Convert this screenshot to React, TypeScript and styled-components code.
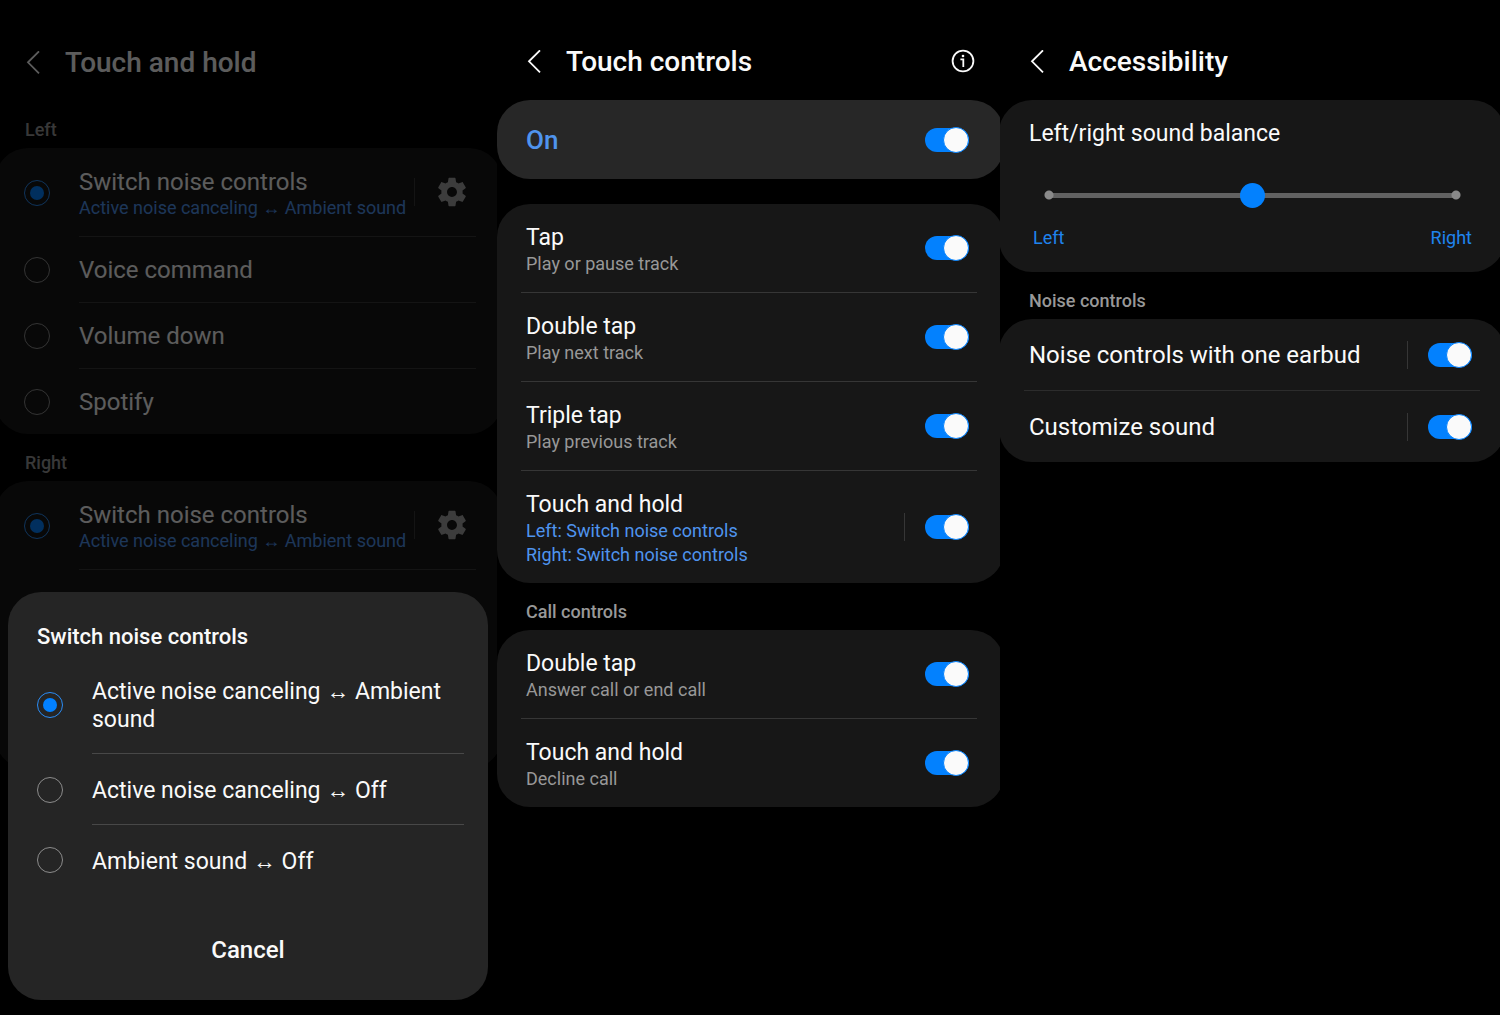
import React, { useState } from "react";
import styled, { createGlobalStyle, css } from "styled-components";

const blue = "#0381fe";
const softBlue = "#4f94ee";

const GlobalStyle = createGlobalStyle`
  *, *::before, *::after { box-sizing: border-box; }
  body {
    margin: 0;
    background: #000;
    color: #fafafa;
    font-family: Roboto, "Noto Sans", sans-serif;
  }
  h1, h2, p { margin: 0; font-weight: 400; }
  button { font: inherit; color: inherit; background: none; border: 0; padding: 0; cursor: pointer; }
`;

const Screens = styled.main`
  display: grid;
  grid-template-columns: 497fr 503fr 500fr;
  min-height: 100vh;
`;

const Screen = styled.section<{ $top: number; $gutter: number; $bleedLeft: number; $bleedRight: number }>`
  --gutter: ${(p) => p.$gutter}px;
  --bleed-left: ${(p) => p.$bleedLeft}px;
  --bleed-right: ${(p) => p.$bleedRight}px;
  position: relative;
  min-width: 0;
  overflow: hidden;
  padding-top: ${(p) => p.$top}px;
`;

const Header = styled.header`
  display: flex;
  align-items: center;
  gap: 16px;
  height: 76px;
  padding: 0 24px 0 var(--gutter);
`;

const Title = styled.h1`
  flex: 1;
  font-size: 28px;
  line-height: 36px;
  font-weight: 500;
`;

const IconButton = styled.button<{ $muted?: boolean }>`
  display: flex;
  flex: none;
  color: ${(p) => (p.$muted ? "#a4a4a4" : "inherit")};
`;

const SectionLabel = styled.h2`
  padding: 19px var(--gutter) 8px;
  font-size: 18px;
  line-height: 20px;
  font-weight: 500;
  color: #989898;
`;

const Card = styled.div<{ $raised?: boolean; $minHeight?: number }>`
  margin: 0 calc(0px - var(--bleed-right)) 0 calc(0px - var(--bleed-left));
  padding: 0 var(--bleed-right) 0 var(--bleed-left);
  min-height: ${(p) => p.$minHeight ?? 0}px;
  border-radius: 33px;
  background: ${(p) => (p.$raised ? "#272727" : "#171717")};
`;

const Stack = styled.div`
  display: flex;
  flex-direction: column;
  gap: 25px;
`;

const MasterRow = styled.div`
  display: flex;
  align-items: center;
  justify-content: space-between;
  height: 79px;
  padding: 0 31px 0 var(--gutter);
  font-size: 26px;
  font-weight: 500;
  color: ${softBlue};
`;

const Row = styled.div<{ $divider: string; $tall?: boolean }>`
  display: flex;
  align-items: center;
  gap: 20px;
  margin: 0 ${(p) => (p.$tall ? 20 : 23)}px 0 24px;
  padding: 0 8px 0 calc(var(--gutter) - 24px);
  &:not(:last-child) {
    border-bottom: 1px solid ${(p) => p.$divider};
  }
`;

const RowText = styled.div<{ $size: "detailed" | "plain" | "tall" }>`
  flex: 1;
  min-width: 0;
  padding: ${(p) => ({ detailed: "20px 0 16px", plain: "19px 0 18px", tall: "22px 0 21px" })[p.$size]};
`;

const RowTitle = styled.label<{ $large?: boolean }>`
  display: block;
  font-size: ${(p) => (p.$large ? 24 : 23)}px;
  line-height: 28px;
`;

const RowNote = styled.p<{ $accent?: boolean }>`
  font-size: 18px;
  line-height: 24px;
  white-space: nowrap;
  color: ${(p) => (p.$accent ? softBlue : "#989898")};
`;

const VerticalRule = styled.span`
  flex: none;
  width: 1px;
  height: 28px;
  background: #363636;
`;

const Toggle = styled.input`
  appearance: none;
  display: flex;
  flex: none;
  align-items: center;
  justify-content: flex-start;
  width: 44px;
  height: 24px;
  margin: 0;
  border-radius: 12px;
  background: #6b6b6b;
  cursor: pointer;
  &::after {
    content: "";
    flex: none;
    width: 26px;
    height: 26px;
    border: 1px solid ${blue};
    border-radius: 50%;
    background: #fafafa;
  }
  &:checked {
    justify-content: flex-end;
    background: ${blue};
  }
`;

const Radio = styled.input`
  appearance: none;
  display: grid;
  flex: none;
  place-items: center;
  width: 26px;
  height: 26px;
  margin: 0;
  border: 1px solid #8c8c8c;
  border-radius: 50%;
  cursor: pointer;
  &:checked {
    border-color: #2a8cf5;
  }
  &:checked::after {
    content: "";
    width: 14px;
    height: 14px;
    border-radius: 50%;
    background: ${blue};
  }
`;

const OptionRow = styled.div`
  display: flex;
  align-items: center;
  gap: 29px;
  padding: 0 21px 0 24px;
`;

const OptionBody = styled.div<{ $divided: boolean }>`
  display: flex;
  flex: 1;
  align-items: center;
  min-width: 0;
  gap: 8px;
  padding-right: 7px;
  ${(p) => p.$divided && css`border-bottom: 1px solid #363636;`}
`;

const SettingsSlot = styled.div`
  display: flex;
  flex: none;
  align-items: center;
  gap: 20px;
`;

const SliderPanel = styled.div`
  padding: 20px 28px 22px 29px;
`;

const Slider = styled.input`
  appearance: none;
  display: block;
  width: calc(100% - 26px);
  height: 26px;
  margin: 34px 11px 18px 15px;
  cursor: pointer;
  background:
    radial-gradient(circle at 5px 50%, #8a8a8a 4px, transparent 5px),
    radial-gradient(circle at calc(100% - 5px) 50%, #8a8a8a 4px, transparent 5px),
    linear-gradient(#626262, #626262) center / calc(100% - 10px) 5px no-repeat;
  &::-webkit-slider-thumb {
    appearance: none;
    width: 25px;
    height: 25px;
    border-radius: 50%;
    background: ${blue};
  }
`;

const SliderEnds = styled.div`
  display: flex;
  justify-content: space-between;
  padding-left: 4px;
  font-size: 18px;
  line-height: 24px;
  color: #1f84ee;
`;

const Scrim = styled.div`
  position: absolute;
  inset: 0;
  display: flex;
  align-items: flex-end;
  padding: 0 9px 15px 8px;
  background: rgba(0, 0, 0, 0.63);
`;

const Sheet = styled.div`
  flex: 1;
  min-width: 0;
  padding: 31px 0 32px;
  border-radius: 33px;
  background: #252525;
`;

const SheetTitle = styled.h2`
  margin-bottom: 4px;
  padding: 0 29px;
  font-size: 22px;
  line-height: 28px;
  font-weight: 500;
`;

const SheetOption = styled.div`
  display: flex;
  align-items: center;
  gap: 29px;
  padding: 0 24px 0 29px;
`;

const SheetLabel = styled.label<{ $divided: boolean }>`
  flex: 1;
  padding: 23px 0 19px;
  font-size: 23px;
  line-height: 28px;
  ${(p) => p.$divided && css`border-bottom: 1px solid #484848;`}
`;

const CancelButton = styled.button`
  display: block;
  width: 100%;
  margin-top: 37px;
  font-size: 24px;
  line-height: 36px;
  font-weight: 500;
`;

function BackIcon() {
  return (
    <svg width="24" height="24" viewBox="0 0 24 24" fill="none" stroke="currentColor" strokeWidth="1.8" aria-hidden="true">
      <path d="M14 0.3 3 11.3 14 22.3" />
    </svg>
  );
}

function InfoIcon() {
  return (
    <svg width="26" height="26" viewBox="0 0 26 26" fill="none" stroke="currentColor" strokeWidth="1.8" aria-hidden="true">
      <circle cx="13" cy="12" r="10.4" />
      <path d="M10.4 10.4h2.9v7.6" />
      <circle cx="13" cy="7" r="1.3" fill="currentColor" stroke="none" />
    </svg>
  );
}

function GearIcon() {
  return (
    <svg width="34" height="34" viewBox="0 0 24 24" fill="currentColor" aria-hidden="true">
      <path d="M19.43 12.98c.04-.32.07-.64.07-.98s-.03-.66-.07-.98l2.11-1.65c.19-.15.24-.42.12-.64l-2-3.46c-.12-.22-.39-.3-.61-.22l-2.49 1c-.52-.4-1.08-.73-1.69-.98l-.38-2.65C14.46 2.18 14.25 2 14 2h-4c-.25 0-.46.18-.49.42l-.38 2.65c-.61.25-1.17.59-1.69.98l-2.49-1c-.23-.09-.49 0-.61.22l-2 3.46c-.13.22-.07.49.12.64l2.11 1.65c-.04.32-.07.65-.07.98s.03.66.07.98l-2.11 1.65c-.19.15-.24.42-.12.64l2 3.46c.12.22.39.3.61.22l2.49-1c.52.4 1.08.73 1.69.98l.38 2.65c.03.24.24.42.49.42h4c.25 0 .46-.18.49-.42l.38-2.65c.61-.25 1.17-.59 1.69-.98l2.49 1c.23.09.49 0 .61-.22l2-3.46c.12-.22.07-.49-.12-.64l-2.11-1.65zM12 15.5c-1.93 0-3.5-1.57-3.5-3.5s1.57-3.5 3.5-3.5 3.5 1.57 3.5 3.5-1.57 3.5-3.5 3.5z" />
    </svg>
  );
}

function ScreenHeader({ title, info }: { title: string; info?: boolean }) {
  return (
    <Header>
      <IconButton type="button" aria-label="Back">
        <BackIcon />
      </IconButton>
      <Title>{title}</Title>
      {info && (
        <IconButton type="button" aria-label="Information">
          <InfoIcon />
        </IconButton>
      )}
    </Header>
  );
}

type ToggleRowProps = {
  id: string;
  title: string;
  notes?: string[];
  accent?: boolean;
  ruled?: boolean;
  tall?: boolean;
  divider?: string;
};

function ToggleRow({ id, title, notes = [], accent, ruled, tall, divider = "#363636" }: ToggleRowProps) {
  return (
    <Row $divider={divider} $tall={tall}>
      <RowText $size={tall ? "tall" : "detailed"}>
        <RowTitle htmlFor={id} $large={tall}>{title}</RowTitle>
        {notes.map((note) => (
          <RowNote key={note} $accent={accent}>{note}</RowNote>
        ))}
      </RowText>
      {ruled && <VerticalRule />}
      <Toggle id={id} type="checkbox" role="switch" defaultChecked />
    </Row>
  );
}

type HoldOption = { title: string; note?: string };

function HoldOptions({ side, options, minHeight }: { side: string; options: HoldOption[]; minHeight?: number }) {
  const [selected, setSelected] = useState(0);
  return (
    <Card role="radiogroup" aria-label={side} $minHeight={minHeight}>
      {options.map((option, i) => {
        const id = `${side}-${i}`;
        return (
          <OptionRow key={id}>
            <Radio id={id} type="radio" name={side} checked={selected === i} onChange={() => setSelected(i)} />
            <OptionBody $divided={i < options.length - 1 || options.length === 1}>
              <RowText $size={option.note ? "detailed" : "plain"}>
                <RowTitle htmlFor={id} $large>{option.title}</RowTitle>
                {option.note && <RowNote $accent>{option.note}</RowNote>}
              </RowText>
              {option.note && (
                <SettingsSlot>
                  <VerticalRule />
                  <IconButton type="button" aria-label={`${option.title} settings`} $muted>
                    <GearIcon />
                  </IconButton>
                </SettingsSlot>
              )}
            </OptionBody>
          </OptionRow>
        );
      })}
    </Card>
  );
}

const noiseOption: HoldOption = {
  title: "Switch noise controls",
  note: "Active noise canceling ↔ Ambient sound",
};

const cycles = [
  "Active noise canceling ↔ Ambient sound",
  "Active noise canceling ↔ Off",
  "Ambient sound ↔ Off",
];

export default function App() {
  const [cycle, setCycle] = useState(0);
  const [balance, setBalance] = useState(50);

  return (
    <>
      <GlobalStyle />
      <Screens>
        <Screen $top={25} $gutter={25} $bleedLeft={5} $bleedRight={5}>
          <ScreenHeader title="Touch and hold" />
          <SectionLabel>Left</SectionLabel>
          <HoldOptions
            side="Left"
            options={[noiseOption, { title: "Voice command" }, { title: "Volume down" }, { title: "Spotify" }]}
          />
          <SectionLabel>Right</SectionLabel>
          <HoldOptions side="Right" options={[noiseOption]} minHeight={288} />
          <Scrim>
            <Sheet role="dialog" aria-labelledby="sheet-title">
              <SheetTitle id="sheet-title">Switch noise controls</SheetTitle>
              {cycles.map((label, i) => (
                <SheetOption key={label}>
                  <Radio
                    id={`cycle-${i}`}
                    type="radio"
                    name="cycle"
                    checked={cycle === i}
                    onChange={() => setCycle(i)}
                  />
                  <SheetLabel htmlFor={`cycle-${i}`} $divided={i < cycles.length - 1}>{label}</SheetLabel>
                </SheetOption>
              ))}
              <CancelButton type="button">Cancel</CancelButton>
            </Sheet>
          </Scrim>
        </Screen>

        <Screen $top={24} $gutter={29} $bleedLeft={0} $bleedRight={4}>
          <ScreenHeader title="Touch controls" info />
          <Stack>
            <Card $raised>
              <MasterRow>
                <label htmlFor="touch-controls">On</label>
                <Toggle id="touch-controls" type="checkbox" role="switch" defaultChecked />
              </MasterRow>
            </Card>
            <Card>
              <ToggleRow id="tap" title="Tap" notes={["Play or pause track"]} />
              <ToggleRow id="double-tap" title="Double tap" notes={["Play next track"]} />
              <ToggleRow id="triple-tap" title="Triple tap" notes={["Play previous track"]} />
              <ToggleRow
                id="touch-hold"
                title="Touch and hold"
                notes={["Left: Switch noise controls", "Right: Switch noise controls"]}
                accent
                ruled
              />
            </Card>
          </Stack>
          <SectionLabel>Call controls</SectionLabel>
          <Card>
            <ToggleRow id="call-double-tap" title="Double tap" notes={["Answer call or end call"]} />
            <ToggleRow id="call-touch-hold" title="Touch and hold" notes={["Decline call"]} />
          </Card>
        </Screen>

        <Screen $top={24} $gutter={29} $bleedLeft={1} $bleedRight={5}>
          <ScreenHeader title="Accessibility" />
          <Card>
            <SliderPanel>
              <RowTitle htmlFor="balance">Left/right sound balance</RowTitle>
              <Slider
                id="balance"
                type="range"
                min={0}
                max={100}
                value={balance}
                onChange={(e) => setBalance(Number(e.target.value))}
              />
              <SliderEnds>
                <span>Left</span>
                <span>Right</span>
              </SliderEnds>
            </SliderPanel>
          </Card>
          <SectionLabel>Noise controls</SectionLabel>
          <Card>
            <ToggleRow id="one-earbud" title="Noise controls with one earbud" ruled tall divider="#2c2c2c" />
            <ToggleRow id="customize" title="Customize sound" ruled tall divider="#2c2c2c" />
          </Card>
        </Screen>
      </Screens>
    </>
  );
}
